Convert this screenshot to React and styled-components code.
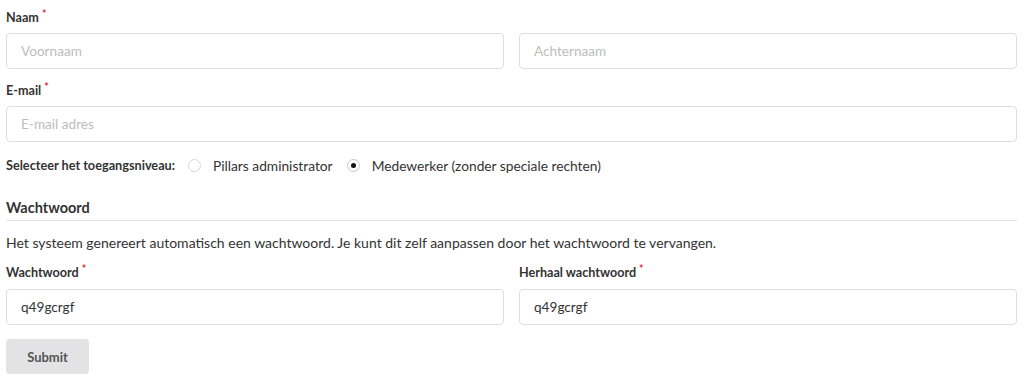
import React from "react";
import styled, { createGlobalStyle } from "styled-components";

const Global = createGlobalStyle`
  html, body { margin: 0; padding: 0; background: #fff; }
  body { font-family: Lato, "Noto Sans", sans-serif; color: #333; }
  * { box-sizing: border-box; }
`;

const Form = styled.form`
  padding: 9px 7px 5px 6px;
  display: flex;
  flex-direction: column;
`;

const Group = styled.div`
  display: flex;
  flex-direction: column;
  margin-top: ${(p) => p.$mt || 0}px;
`;

const Row = styled.div`
  display: grid;
  grid-template-columns: 1fr 1fr;
  column-gap: 15px;
  margin-top: ${(p) => p.$mt || 0}px;
`;

const Label = styled.label`
  font-size: 12.6px;
  font-weight: 700;
  line-height: 18px;
  color: #333;
  margin-bottom: ${(p) => p.$mb ?? 6}px;
`;

const Req = styled.span`
  color: #e0262d;
  font-size: 10.5px;
  vertical-align: top;
  line-height: 11px;
  margin-left: 3px;
`;

const Input = styled.input`
  height: 36px;
  width: 100%;
  border: 1px solid #dedede;
  border-radius: 4px;
  padding: 0 14px;
  font-family: Lato, "Noto Sans", sans-serif;
  font-size: 13.6px;
  color: #333;
  outline: none;
  &::placeholder { color: #bdbdbd; }
`;

const RadioRow = styled.div`
  display: flex;
  align-items: center;
  height: 20px;
  margin-top: 13px;
  font-size: 13.75px;
`;

const RadioTitle = styled.span`
  font-weight: 700;
  font-size: 12.7px;
  margin-right: 13px;
`;

const RadioOption = styled.label`
  display: flex;
  align-items: center;
  margin-right: 14px;
  color: #333;
`;

const Circle = styled.span`
  width: 13px;
  height: 13px;
  border-radius: 50%;
  border: 1px solid ${(p) => (p.$checked ? "#c8c8c8" : "#d8d8d8")};
  display: flex;
  align-items: center;
  justify-content: center;
  margin-right: 12px;
  &::after {
    content: "";
    width: 5px;
    height: 5px;
    border-radius: 50%;
    background: ${(p) => (p.$checked ? "#111" : "transparent")};
  }
`;

const Heading = styled.h3`
  margin: 23px 0 0;
  font-size: 14.5px;
  font-weight: 700;
  line-height: 20px;
  padding-bottom: 2px;
  border-bottom: 1px solid #e2e2e2;
  color: #333;
`;

const Text = styled.p`
  margin: 13px 0 0;
  font-size: 14px;
  line-height: 18px;
  color: #333;
`;

const Submit = styled.button`
  margin-top: 14px;
  align-self: flex-start;
  width: 83px;
  height: 35px;
  border: none;
  border-radius: 4px;
  background: #e3e3e5;
  color: #555;
  font-family: Lato, "Noto Sans", sans-serif;
  font-weight: 700;
  font-size: 13px;
`;

export default function App() {
  return (
    <>
      <Global />
      <Form onSubmit={(e) => e.preventDefault()}>
        <Group>
          <Label>
            Naam<Req>*</Req>
          </Label>
          <Row>
            <Input placeholder="Voornaam" />
            <Input placeholder="Achternaam" />
          </Row>
        </Group>
        <Group $mt={13}>
          <Label>
            E-mail<Req>*</Req>
          </Label>
          <Input placeholder="E-mail adres" />
        </Group>
        <RadioRow>
          <RadioTitle>Selecteer het toegangsniveau:</RadioTitle>
          <RadioOption>
            <Circle />
            Pillars administrator
          </RadioOption>
          <RadioOption>
            <Circle $checked />
            Medewerker (zonder speciale rechten)
          </RadioOption>
        </RadioRow>
        <Heading>Wachtwoord</Heading>
        <Text>
          Het systeem genereert automatisch een wachtwoord. Je kunt dit zelf aanpassen door het wachtwoord te vervangen.
        </Text>
        <Row $mt={12}>
          <Group>
            <Label $mb={7}>
              Wachtwoord<Req>*</Req>
            </Label>
            <Input defaultValue="q49gcrgf" />
          </Group>
          <Group>
            <Label $mb={7}>
              Herhaal wachtwoord<Req>*</Req>
            </Label>
            <Input defaultValue="q49gcrgf" />
          </Group>
        </Row>
        <Submit type="submit">Submit</Submit>
      </Form>
    </>
  );
}
